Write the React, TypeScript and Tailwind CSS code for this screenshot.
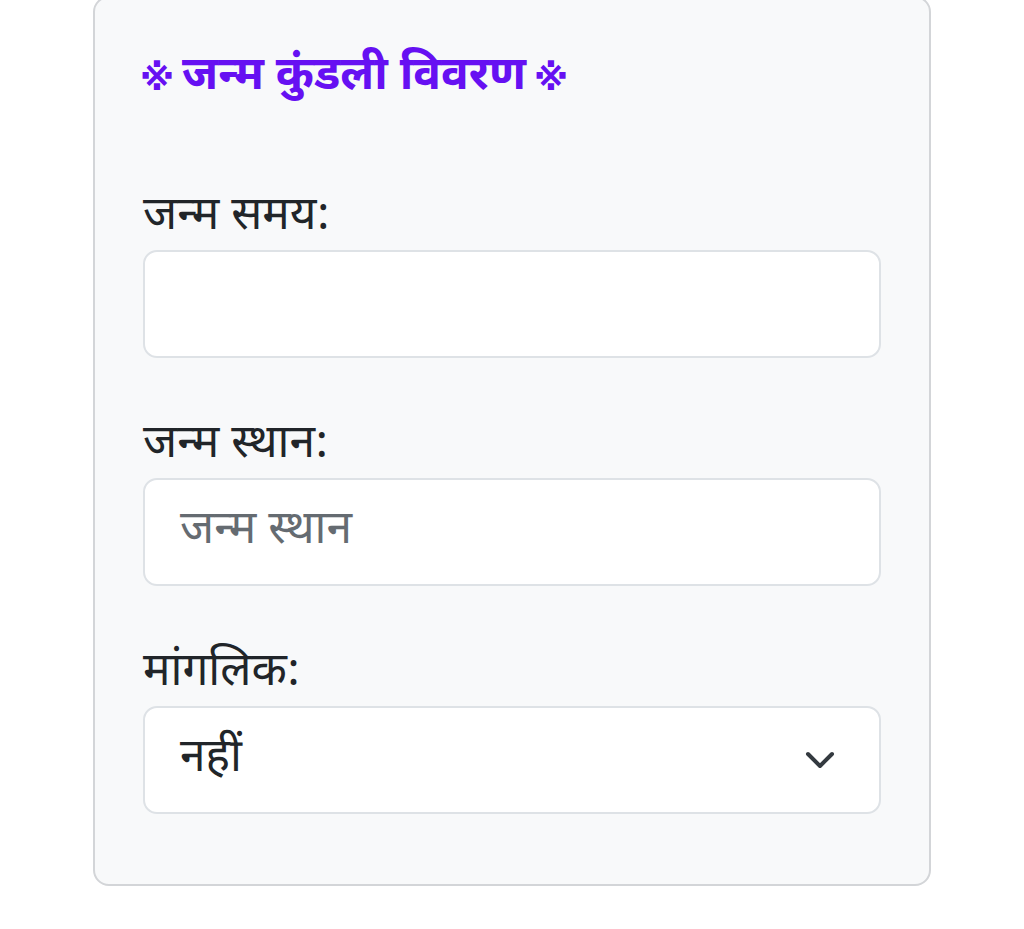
import React from "react";

export default function App() {
  const font = { fontFamily: '"Noto Sans Devanagari", "Noto Sans", "Lohit Devanagari", sans-serif' };
  const sym = { fontFamily: '"DejaVu Sans", sans-serif' };
  return (
    <div className="min-h-[929px] w-[1024px] bg-white" style={font}>
      <div className="ml-[93px] w-[838px] -mt-[4px] rounded-[16px] border-2 border-[#d3d5d8] bg-[#f8f9fa] px-[48px] pt-[53px] pb-[70px]">
        <h2 className="text-[46px] font-bold leading-[55px] text-[#6610f2] mb-[85px] flex items-center gap-[8px]">
          <span className="text-[35px] font-bold -ml-[3px]" style={sym}>※</span>
          <span>जन्म कुंडली विवरण</span>
          <span className="text-[35px] font-bold" style={sym}>※</span>
        </h2>
        <div className="flex flex-col gap-[61px]">
          <div>
            <label className="block text-[46px] leading-[55px] text-[#212529] mb-[4px]">जन्म समय:</label>
            <div className="h-[108px] rounded-[14px] border-2 border-[#dee2e6] bg-white" />
          </div>
          <div>
            <label className="block text-[46px] leading-[55px] text-[#212529] mb-[4px]">जन्म स्थान:</label>
            <div className="h-[108px] rounded-[14px] border-2 border-[#dee2e6] bg-white flex items-center px-[35px] text-[46px] text-[#656b71]">जन्म स्थान</div>
          </div>
          <div>
            <label className="block text-[46px] leading-[55px] text-[#212529] mb-[4px]">मांगलिक:</label>
            <div className="h-[108px] rounded-[14px] border-2 border-[#dee2e6] bg-white flex items-center justify-between pl-[35px] pr-[44px] text-[46px] text-[#212529]">
              <span>नहीं</span>
              <svg width="30" height="18" viewBox="0 0 30 18" fill="none">
                <path d="M3 3 L15 15 L27 3" stroke="#343a40" strokeWidth="4" strokeLinecap="round" strokeLinejoin="round" />
              </svg>
            </div>
          </div>
        </div>
      </div>
    </div>
  );
}
